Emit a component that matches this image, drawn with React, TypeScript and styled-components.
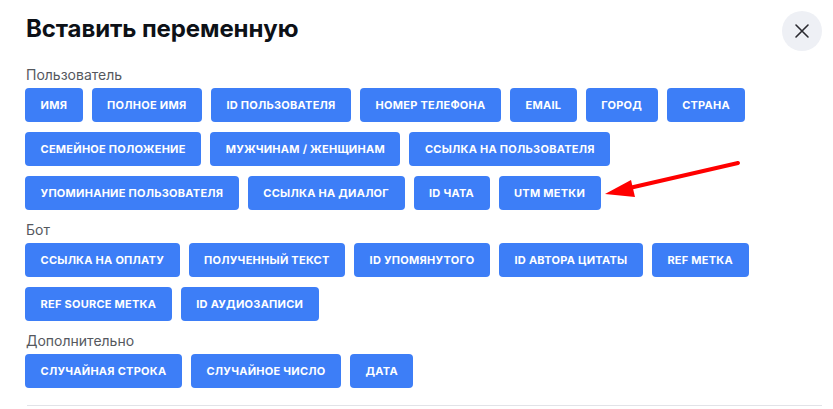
import React from "react";
import styled, { createGlobalStyle } from "styled-components";

const Global = createGlobalStyle`
  html, body { margin: 0; padding: 0; background: #fff; }
  body { font-family: Inter, "Noto Sans", sans-serif; }
  * { box-sizing: border-box; }
`;

const Modal = styled.div`
  position: relative;
  width: 833px;
  height: 409px;
  padding: 11px 11px 0 25px;
  overflow: hidden;
`;

const Header = styled.div`
  display: flex;
  align-items: center;
  justify-content: space-between;
  height: 40px;
`;

const Title = styled.h1`
  margin: 0 0 6px 1px;
  font-size: 24px;
  font-weight: 700;
  color: #0d1117;
  letter-spacing: -0.1px;
`;

const CloseButton = styled.button`
  width: 40px;
  height: 40px;
  border-radius: 50%;
  border: none;
  background: #eef0f5;
  display: flex;
  align-items: center;
  justify-content: center;
  padding: 0;
  cursor: pointer;
`;

const Section = styled.div<{ $first?: boolean }>`
  margin-top: ${(p) => (p.$first ? "16px" : "12px")};
`;

const Label = styled.div`
  font-size: 14px;
  line-height: 16px;
  color: #55585e;
  margin: 0 0 5px 1px;
`;

const Chips = styled.div`
  display: flex;
  flex-wrap: wrap;
  gap: 10px 9px;
`;

const Chip = styled.button`
  height: 34px;
  padding: 0 15.5px;
  border: none;
  border-radius: 4px;
  background: #3d7ef7;
  color: #fff;
  font-family: Inter, "Noto Sans", sans-serif;
  font-size: 11px;
  font-weight: 700;
  letter-spacing: 0.25px;
  text-transform: uppercase;
  cursor: pointer;
  white-space: nowrap;
`;

const Divider = styled.div`
  margin: 17px 0 0 2px;
  height: 1px;
  background: #e2e3e8;
`;

const Arrow = styled.svg`
  position: absolute;
  left: 0;
  top: 0;
  pointer-events: none;
`;

const sections: { title: string; items: string[] }[] = [
  {
    title: "Пользователь",
    items: [
      "Имя",
      "Полное имя",
      "ID пользователя",
      "Номер телефона",
      "Email",
      "Город",
      "Страна",
      "Семейное положение",
      "Мужчинам / Женщинам",
      "Ссылка на пользователя",
      "Упоминание пользователя",
      "Ссылка на диалог",
      "ID чата",
      "UTM метки",
    ],
  },
  {
    title: "Бот",
    items: [
      "Ссылка на оплату",
      "Полученный текст",
      "ID упомянутого",
      "ID автора цитаты",
      "REF метка",
      "REF SOURCE метка",
      "ID аудиозаписи",
    ],
  },
  {
    title: "Дополнительно",
    items: ["Случайная строка", "Случайное число", "Дата"],
  },
];

export default function App() {
  return (
    <>
      <Global />
      <Modal>
        <Header>
          <Title>Вставить переменную</Title>
          <CloseButton aria-label="Закрыть">
            <svg width="16" height="16" viewBox="0 0 16 16">
              <path d="M2 2L14 14M14 2L2 14" stroke="#2a2a30" strokeWidth="1.6" strokeLinecap="round" />
            </svg>
          </CloseButton>
        </Header>
        {sections.map((s, i) => (
          <Section key={s.title} $first={i === 0}>
            <Label>{s.title}</Label>
            <Chips>
              {s.items.map((it) => (
                <Chip key={it}>{it}</Chip>
              ))}
            </Chips>
          </Section>
        ))}
        <Divider />
        <Arrow width="833" height="409" viewBox="0 0 833 409">
          <line x1="738" y1="163" x2="625" y2="189" stroke="#ff0000" strokeWidth="4" strokeLinecap="round" />
          <polygon points="605,194 631,180 635,197" fill="#ff0000" />
        </Arrow>
      </Modal>
    </>
  );
}
